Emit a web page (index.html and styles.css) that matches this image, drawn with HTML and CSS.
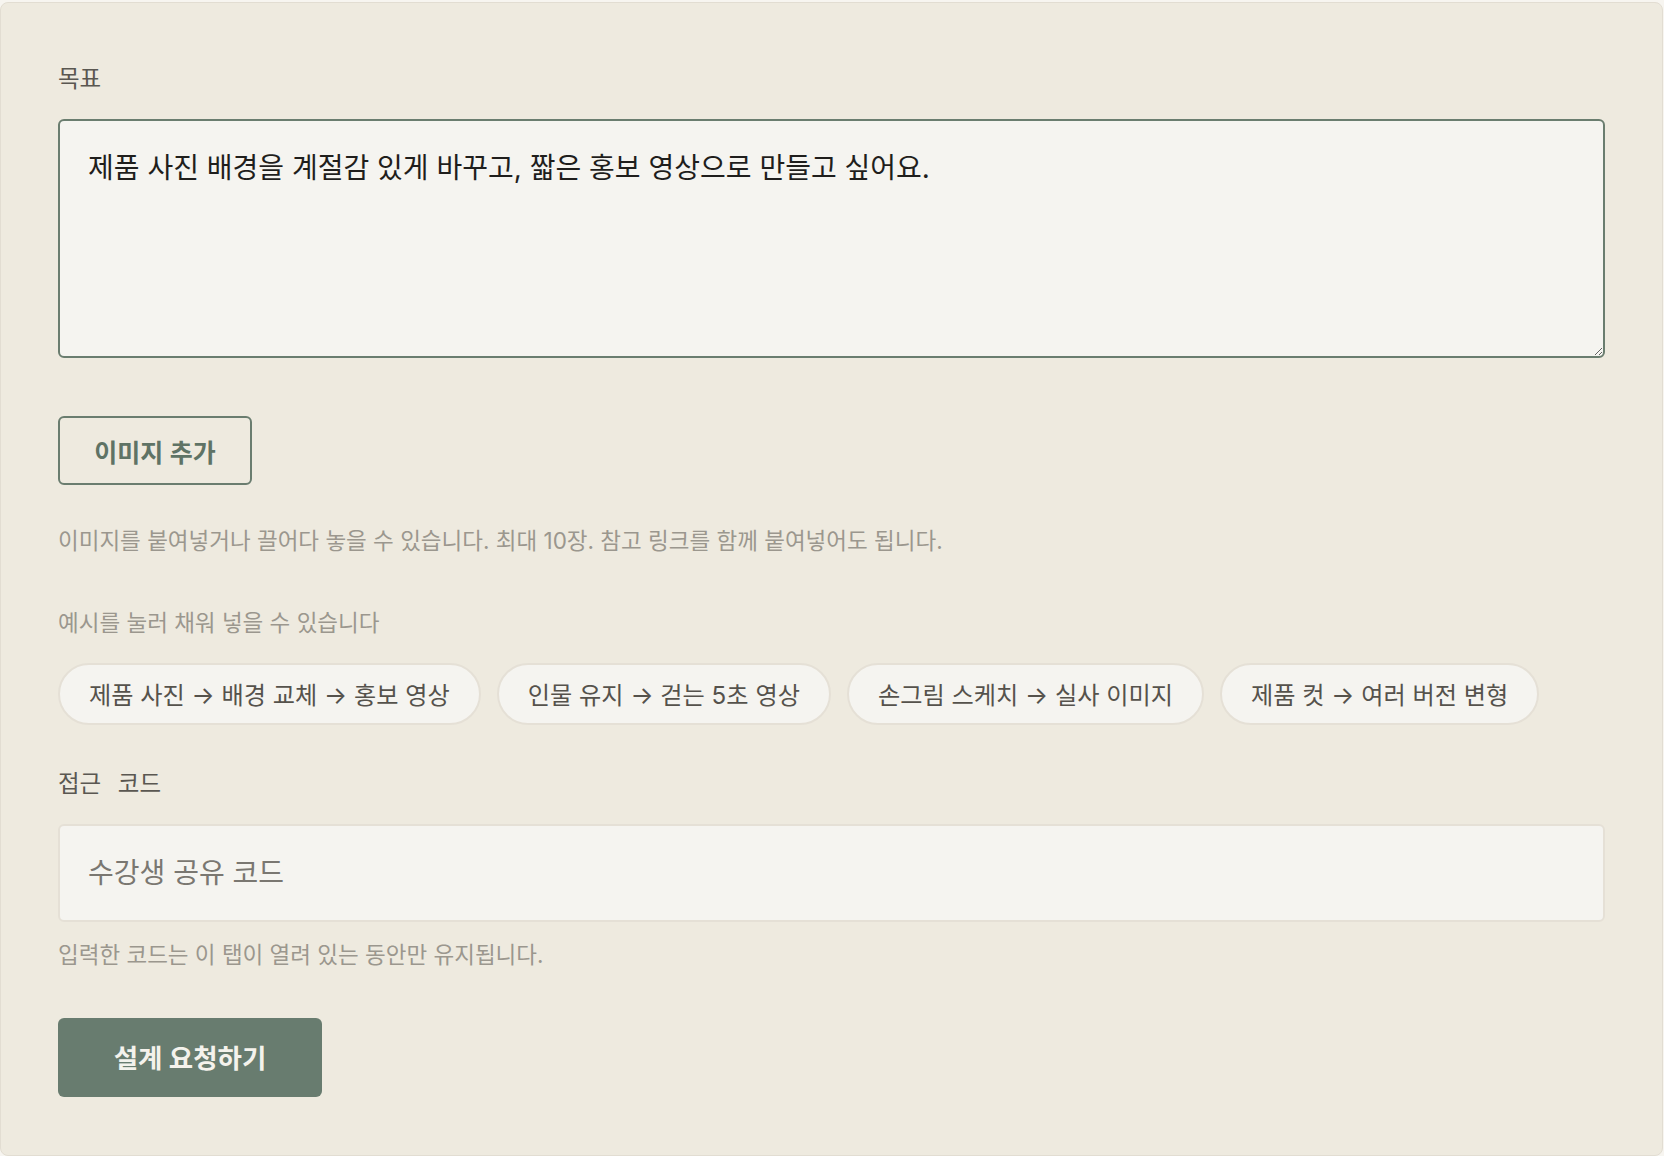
FILE: index.html
```html
<!DOCTYPE html>
<html lang="ko">
<head>
    <meta charset="UTF-8">
    <meta name="viewport" content="width=device-width, initial-scale=1.0">
    <title>설계 요청</title>
    <link rel="stylesheet" href="styles.css">
</head>
<body>
    <form class="panel">
        <!-- Goal -->
        <label class="field-label" for="goal">목표</label>
        <textarea id="goal" class="goal-input">제품 사진 배경을 계절감 있게 바꾸고, 짧은 홍보 영상으로 만들고 싶어요.</textarea>

        <!-- Images -->
        <button type="button" class="add-image">이미지 추가</button>
        <p class="hint image-hint">이미지를 붙여넣거나 끌어다 놓을 수 있습니다. 최대 10장. 참고 링크를 함께 붙여넣어도 됩니다.</p>

        <!-- Examples -->
        <p class="hint examples-label">예시를 눌러 채워 넣을 수 있습니다</p>
        <div class="examples">
            <button type="button" class="example">제품 사진 → 배경 교체 → 홍보 영상</button>
            <button type="button" class="example">인물 유지 → 걷는 5초 영상</button>
            <button type="button" class="example">손그림 스케치 → 실사 이미지</button>
            <button type="button" class="example">제품 컷 → 여러 버전 변형</button>
        </div>

        <!-- Access code -->
        <label class="field-label code-label" for="code">접근 코드</label>
        <input id="code" class="code-input" type="text" placeholder="수강생 공유 코드">
        <p class="hint code-hint">입력한 코드는 이 탭이 열려 있는 동안만 유지됩니다.</p>

        <button type="submit" class="submit">설계 요청하기</button>
    </form>
</body>
</html>
```

FILE: styles.css
```css
* {
    margin: 0;
    padding: 0;
    box-sizing: border-box;
}

body {
    background-color: #f7f5f0;
    font-family: Inter, "Noto Sans CJK KR", sans-serif;
    color: #2b2a27;
}

.panel {
    display: flex;
    flex-direction: column;
    align-items: flex-start;
    width: 1663px;
    height: 1154px;
    margin-top: 2px;
    padding: 61px 57px 0 57px;
    background-color: #eeeadf;
    border: 1px solid #e2ddd2;
    border-radius: 8px;
}

.field-label {
    font-size: 23.5px;
    line-height: 30px;
    color: #5a5751;
    margin-bottom: 25px;
}

.goal-input {
    width: 100%;
    height: 239px;
    padding: 28px 28px 24px;
    font-family: inherit;
    font-size: 28px;
    line-height: 39px;
    color: #1f1e1c;
    background-color: #f5f4f0;
    border: 2px solid #6a7d6f;
    border-radius: 6px;
    outline: none;
}

.add-image {
    margin-top: 58px;
    width: 194px;
    height: 69px;
    font-family: inherit;
    font-size: 25px;
    font-weight: 600;
    color: #5f7365;
    background: transparent;
    border: 2px solid #6a7d6f;
    border-radius: 6px;
    cursor: pointer;
}

.hint {
    font-size: 22.5px;
    line-height: 30px;
    color: #9b978e;
}

.image-hint {
    margin-top: 41px;
}

.examples-label {
    margin-top: 52px;
}

.examples {
    display: flex;
    gap: 16px;
    margin-top: 25px;
}

.example {
    height: 62px;
    padding: 0 29px 2px;
    font-family: inherit;
    font-size: 24.2px;
    color: #55524c;
    background-color: #f5f4f0;
    border: 2px solid #e5e0d6;
    border-radius: 999px;
    cursor: pointer;
}

.code-label {
    margin-top: 44px;
    word-spacing: 10px;
}

.code-input {
    width: 100%;
    height: 98px;
    padding: 0 28px;
    font-family: inherit;
    font-size: 28px;
    color: #2b2a27;
    background-color: #f5f4f0;
    border: 2px solid #e5e0d6;
    border-radius: 6px;
    outline: none;
}

.code-input::placeholder {
    color: #7a7771;
}

.code-hint {
    margin-top: 18px;
}

.submit {
    margin-top: 48px;
    width: 264px;
    height: 79px;
    padding-bottom: 3px;
    font-family: inherit;
    font-size: 26.5px;
    font-weight: 700;
    color: #f4f2ec;
    background-color: #687c6f;
    border: none;
    border-radius: 6px;
    cursor: pointer;
}
```
